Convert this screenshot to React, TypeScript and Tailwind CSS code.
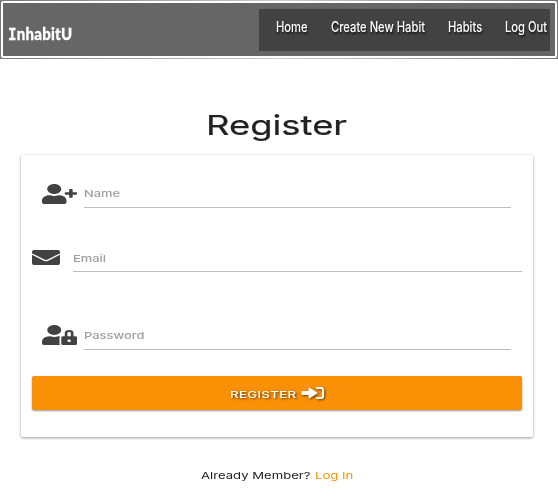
import { FaUserPlus, FaUserLock } from "react-icons/fa";

const body = "font-['Inter',sans-serif]";
const label =
  "block origin-left scale-x-[1.36] whitespace-nowrap text-[9.5px] leading-5 font-medium text-[#9e9e9e]";
const navText =
  "block origin-left scale-x-[0.8] whitespace-nowrap text-[14px] leading-[18px] font-medium text-white [text-shadow:1px_2px_2px_rgba(0,0,0,0.7)]";

function EnterIcon() {
  return (
    <svg viewBox="0 0 24 14" className="mt-[10px] h-[14px] w-[24px] drop-shadow-[1px_1px_1px_rgba(0,0,0,0.6)]">
      <path d="M1.2 5H7.5V2.2Q7.7 1 8.8 1.7L16.2 6.5Q16.8 7 16.2 7.5L8.8 12.3Q7.7 13 7.5 11.8V9H1.2Q.5 9 .5 8.3V5.7Q.5 5 1.2 5Z" fill="currentColor" />
      <path d="M16 2H20Q22 2 22 4V10Q22 12 20 12H16" fill="none" stroke="currentColor" strokeWidth="2" strokeLinecap="round" />
    </svg>
  );
}

function EnvelopeIcon() {
  return (
    <svg viewBox="0 0 28 15" className="mt-[2px] h-[15px] w-[28px] text-[#424242]">
      <rect width="28" height="15" rx="2" fill="currentColor" />
      <path d="M0 4L12 10.2Q14 11.2 16 10.2L28 4" fill="none" stroke="white" strokeWidth="1.3" />
    </svg>
  );
}

export default function App() {
  return (
    <div className={`h-[497px] w-[558px] overflow-hidden bg-white text-[#212121] ${body}`}>
      <header className="h-[59px] bg-gradient-to-r from-[#777] via-[#ccc] to-[#777] p-px">
        <div className="h-[57px] rounded-[2px] border-2 border-white bg-[#666]">
          <div className="flex h-full justify-between">
            <div className="mt-[21px] ml-[5px] h-5 w-[66px]">
              <span className="block origin-left scale-x-[0.88] whitespace-nowrap font-['Lato',sans-serif] text-[17px] leading-5 font-black tracking-[0.3px] text-white [-webkit-text-stroke:0.3px_white]">
                <span className="font-['DejaVu_Sans_Mono',monospace] text-[16px] font-bold">I</span>nhabitU
              </span>
            </div>
            <nav className="mt-[6px] mr-[5px] flex h-[42px] w-[291px] bg-[#424242] pt-[9px] pl-[17px]">
              <a className="w-[55px] shrink-0"><span className={navText}>Home</span></a>
              <a className="w-[117px] shrink-0"><span className={navText}>Create New Habit</span></a>
              <a className="w-[57px] shrink-0"><span className={navText}>Habits</span></a>
              <a className="w-[43px] shrink-0"><span className={navText}>Log Out</span></a>
            </nav>
          </div>
        </div>
      </header>

      <main className="pr-[25px] pl-[21px]">
        <h1 className="mt-[48px] ml-[185px] h-9 w-[140px]">
          <span className="block origin-left scale-x-[1.325] whitespace-nowrap text-[27.5px] leading-9 [-webkit-text-stroke:0.2px_#212121]">Register</span>
        </h1>
        <form className="mt-[12px] h-[282px] rounded-[2px] px-[11px] pt-[29px] shadow-[0_1px_3px_rgba(0,0,0,0.4)]">
          <div className="flex h-[24px] pr-[11px] pl-[10px]">
            <FaUserPlus preserveAspectRatio="none" className="h-[20px] w-[35px] text-[#424242]" />
            <div className="ml-[7px] flex-1 border-b border-[#bdbdbd]">
              <span className={label}>Name</span>
            </div>
          </div>
          <div className="mt-[40px] flex h-[24px]">
            <EnvelopeIcon />
            <div className="ml-[13px] flex-1 border-b border-[#bdbdbd]">
              <span className={`${label} pt-px`}>Email</span>
            </div>
          </div>
          <div className="mt-[54px] flex h-[24px] pr-[11px] pl-[10px]">
            <FaUserLock preserveAspectRatio="none" className="-mt-px h-[20px] w-[35px] text-[#424242]" />
            <div className="ml-[7px] flex-1 border-b border-[#bdbdbd]">
              <span className={label}>Password</span>
            </div>
          </div>
          <button className="mt-[26px] flex h-[34px] w-full rounded-[2px] bg-[#fa9005] pl-[198px] text-white shadow-[0_1px_2px_rgba(0,0,0,0.4)]">
            <span className="mt-[10px] block w-[71px] text-left">
              <span className="block origin-left scale-x-[1.4] whitespace-nowrap text-[9.5px] leading-[18px] font-medium tracking-[0.2px] [text-shadow:1px_1px_2px_rgba(0,0,0,0.6)]">REGISTER</span>
            </span>
            <EnterIcon />
          </button>
        </form>
        <p className="mt-[30px] ml-[180px] flex h-[18px] text-[9.5px] leading-[18px]">
          <span className="block w-[114px]"><span className="block origin-left scale-x-[1.38] whitespace-nowrap">Already Member?</span></span>
          <a className="block w-[40px] text-[#fa9005]"><span className="block origin-left scale-x-[1.38] whitespace-nowrap">Log In</span></a>
        </p>
      </main>
    </div>
  );
}
